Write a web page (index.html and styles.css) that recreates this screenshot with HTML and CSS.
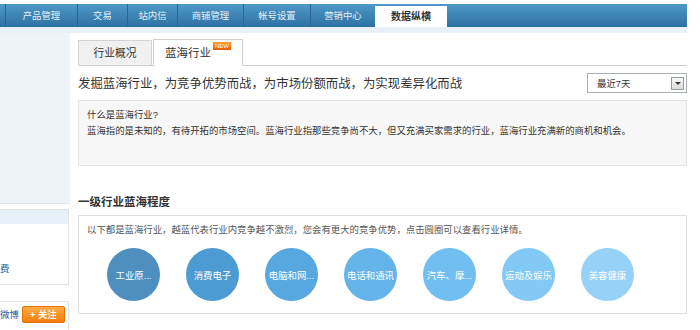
FILE: index.html
```html
<!DOCTYPE html>
<html lang="zh-CN">
<head>
  <meta charset="UTF-8">
  <title>数据纵横 - 蓝海行业</title>
  <link rel="stylesheet" href="styles.css">
</head>
<body>
  <div class="topnav">
    <ul class="nav">
      <li class="w72">产品管理</li>
      <li class="w50">交易</li>
      <li class="w50">站内信</li>
      <li class="w66">商铺管理</li>
      <li class="w67">帐号设置</li>
      <li class="w65">营销中心</li>
      <li class="w72 active">数据纵横</li>
    </ul>
  </div>
  <div class="strip"></div>

  <div class="page">
    <aside class="side">
      <div class="side-top"></div>
      <div class="side-box">
        <div class="side-band"></div>
        <div class="side-link">费</div>
      </div>
      <div class="side-box follow">
        <span class="side-link">微博</span>
        <button class="btn-follow">+ 关注</button>
      </div>
    </aside>

    <main class="main">
      <div class="tabs">
        <div class="tab">行业概况</div>
        <div class="tab on">蓝海行业<span class="badge">NEW</span></div>
      </div>

      <div class="headline">
        <h2>发掘蓝海行业，为竞争优势而战，为市场份额而战，为实现差异化而战</h2>
        <div class="select">
          <span>最近7天</span>
          <span class="select-btn"></span>
        </div>
      </div>

      <div class="intro">
        <p>什么是蓝海行业?</p>
        <p>蓝海指的是未知的，有待开拓的市场空间。蓝海行业指那些竞争尚不大，但又充满买家需求的行业，蓝海行业充满新的商机和机会。</p>
      </div>

      <h3>一级行业蓝海程度</h3>
      <div class="panel">
        <p class="desc">以下都是蓝海行业，越蓝代表行业内竞争越不激烈，您会有更大的竞争优势，点击圆圈可以查看行业详情。</p>
        <div class="circles">
          <a class="circle c1">工业原...</a>
          <a class="circle c2">消费电子</a>
          <a class="circle c3">电脑和网...</a>
          <a class="circle c4">电话和通讯</a>
          <a class="circle c5">汽车、摩...</a>
          <a class="circle c6">运动及娱乐</a>
          <a class="circle c7">美容健康</a>
        </div>
      </div>
    </main>
  </div>
</body>
</html>
```

FILE: styles.css
```css
body {
  margin: 0;
  padding-top: 4px;
  background-color: #fff;
  font-family: "Liberation Sans", "Noto Sans CJK SC", sans-serif;
  color: #333;
}

.topnav {
  width: 687px;
  height: 23px;
  background: linear-gradient(#4e98c7, #2d71a1);
}

.nav {
  display: flex;
  margin: 0;
  padding: 0 0 0 5px;
  list-style: none;
  height: 23px;
}

.nav li {
  height: 23px;
  line-height: 23px;
  text-align: center;
  font-size: 9.4px;
  color: #e6f0f8;
  border-left: 1px solid #2a6593;
  box-sizing: border-box;
}

.nav li.w50 { width: 50px; }
.nav li.w65 { width: 65px; }
.nav li.w66 { width: 66px; }
.nav li.w67 { width: 67px; }
.nav li.w72 { width: 72px; }

.nav li.active {
  margin-top: 2px;
  height: 21px;
  line-height: 21px;
  background-color: #fff;
  color: #333;
  font-weight: bold;
  font-size: 10px;
  border-left: 0;
}

.strip {
  width: 687px;
  height: 6px;
  background-color: #e9f1f8;
}

.page {
  display: flex;
  width: 690px;
}

/* left column, mostly cut off */
.side {
  width: 70px;
  flex-shrink: 0;
}

.side-top {
  height: 170px;
  background-color: #eef3f8;
  border-bottom: 1px solid #e0e7ef;
}

.side-box {
  width: 69px;
  height: 76px;
  margin-top: 5px;
  border: 1px solid #e2e2e2;
  border-left: 0;
  box-sizing: border-box;
  background-color: #fff;
}

.side-band {
  height: 14px;
  background-color: #e8f0f9;
}

.side-link {
  font-size: 9.4px;
  color: #1d5c99;
}

.side-box .side-link {
  display: block;
  margin-top: 37px;
}

.side-box.follow {
  display: flex;
  align-items: center;
  gap: 3px;
  height: 40px;
  margin-top: 16px;
  padding-bottom: 14px;
}

.side-box.follow .side-link {
  display: inline;
  margin-top: 0;
}

.btn-follow {
  width: 43px;
  height: 17px;
  padding: 0;
  border: 1px solid #e07000;
  border-radius: 2px;
  background: linear-gradient(#ffad48, #f57d08);
  color: #fff;
  font-family: inherit;
  font-size: 9.4px;
  font-weight: bold;
}

.main {
  flex: 1;
  padding: 0 3px 0 8px;
  background-color: #fff;
}

.tabs {
  display: flex;
  margin-top: 7px;
  height: 25px;
  border-bottom: 1px solid #cfcfcf;
}

.tab {
  width: 74px;
  height: 25px;
  line-height: 25px;
  text-align: center;
  font-size: 10.8px;
  color: #333;
  background-color: #f1f1f1;
  border: 1px solid #d3d3d3;
  border-bottom: 0;
  box-sizing: border-box;
}

.tab.on {
  position: relative;
  width: 90px;
  height: 27px;
  margin-top: -1px;
  margin-left: 1px;
  padding-left: 11px;
  text-align: left;
  background-color: #fff;
  border-color: #cfcfcf;
  font-size: 11.5px;
  line-height: 27px;
}

.badge {
  position: absolute;
  top: 2px;
  left: 59px;
  padding: 0 2px;
  height: 8px;
  line-height: 8px;
  font-size: 6px;
  color: #fff;
  background: linear-gradient(#ff9c3a, #e85a00);
}

.headline {
  display: flex;
  justify-content: space-between;
  align-items: center;
  margin-top: 7px;
  height: 20px;
}

.headline h2 {
  margin: 0;
  font-size: 12.4px;
  font-weight: normal;
  color: #333;
}

.select {
  display: flex;
  justify-content: space-between;
  align-items: center;
  width: 100px;
  height: 20px;
  padding: 0 2px 0 9px;
  border: 1px solid #a9afb6;
  box-sizing: border-box;
  font-size: 9.4px;
  color: #333;
}

.select-btn {
  position: relative;
  width: 13px;
  height: 13px;
  border: 1px solid #9a9a9a;
  background: linear-gradient(#fafafa, #dcdcdc);
  box-sizing: border-box;
}

.select-btn::after {
  content: "";
  position: absolute;
  left: 3px;
  top: 4px;
  border-left: 3px solid transparent;
  border-right: 3px solid transparent;
  border-top: 3px solid #333;
}

.intro {
  margin-top: 7px;
  height: 66px;
  padding: 6px 8px;
  background-color: #f7f7f7;
  border: 1px solid #e3e3e3;
  box-sizing: border-box;
}

.intro p {
  margin: 0;
  font-size: 9.4px;
  line-height: 16px;
  color: #333;
}

h3 {
  margin: 28px 0 0;
  font-size: 11.5px;
  line-height: 16px;
  color: #333;
}

.panel {
  margin-top: 5px;
  height: 99px;
  padding: 7px 8px 0;
  border: 1px solid #e0e0e0;
  box-sizing: border-box;
}

.desc {
  margin: 0;
  font-size: 9.4px;
  line-height: 14px;
  color: #555;
}

.circles {
  display: flex;
  gap: 26px;
  margin: 11px 0 0 20px;
}

.circle {
  display: flex;
  justify-content: center;
  align-items: center;
  width: 53px;
  height: 53px;
  border-radius: 50%;
  font-size: 9.4px;
  color: #fff;
  white-space: nowrap;
  cursor: pointer;
}

.c1 { background-color: #4e8fc0; }
.c2 { background-color: #4c9bd2; }
.c3 { background-color: #57a8e0; }
.c4 { background-color: #64b4ea; }
.c5 { background-color: #71bff1; }
.c6 { background-color: #83c9f5; }
.c7 { background-color: #96d2f7; }
```
